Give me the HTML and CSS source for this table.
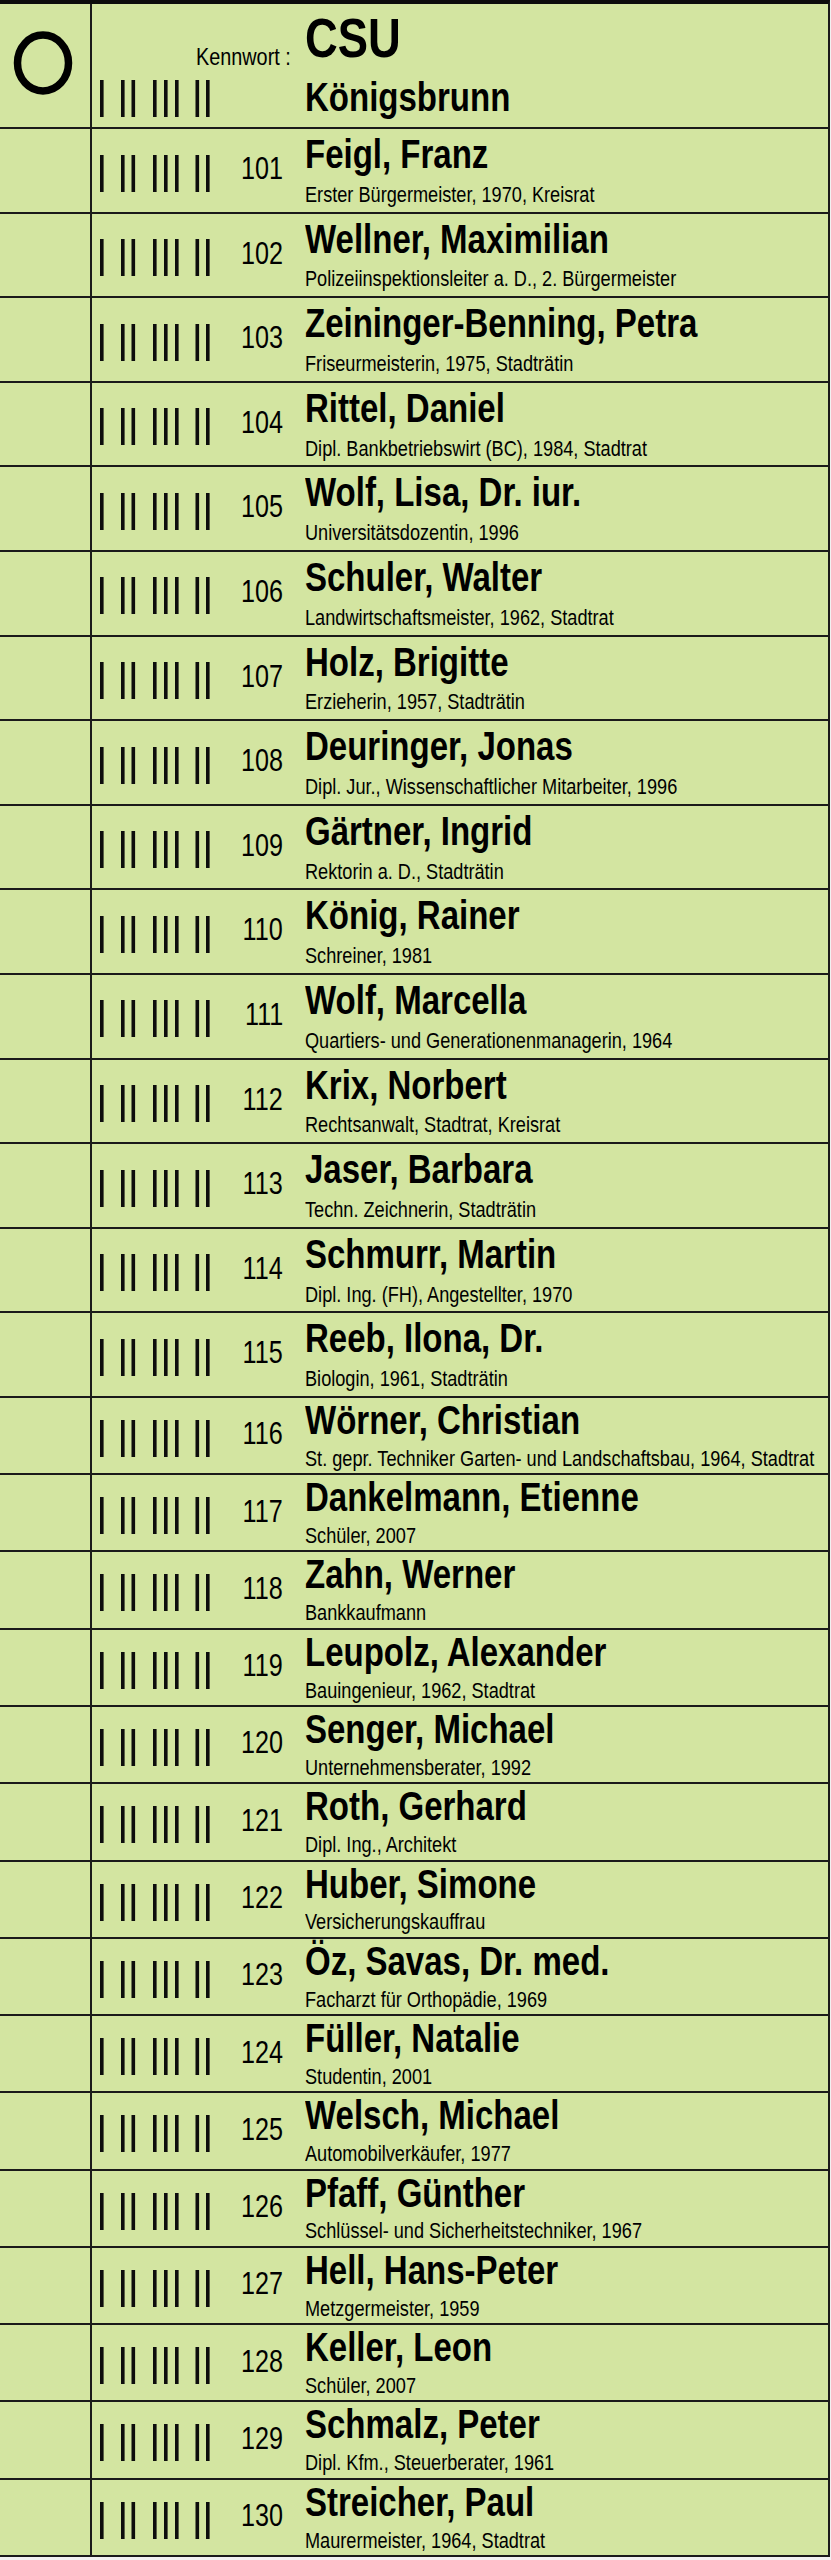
FILE: index.html
```html
<!DOCTYPE html>
<html lang="de">
<head>
<meta charset="utf-8">
<title>Stimmzettel CSU Königsbrunn</title>
<link rel="stylesheet" href="styles.css">
</head>
<body>
<svg class="defs" width="0" height="0" aria-hidden="true">
  <defs>
    <symbol id="bars" viewBox="0 0 110 37">
      <rect x="0" y="0" width="3.6" height="37"/>
      <rect x="21" y="0" width="3.6" height="37"/>
      <rect x="31.5" y="0" width="3.6" height="37"/>
      <rect x="53" y="0" width="3.6" height="37"/>
      <rect x="64" y="0" width="3.6" height="37"/>
      <rect x="75" y="0" width="3.6" height="37"/>
      <rect x="95.5" y="0" width="3.6" height="37"/>
      <rect x="106" y="0" width="3.6" height="37"/>
    </symbol>
  </defs>
</svg>
<div class="ballot">
  <div class="row head">
    <div class="c1"><svg class="ring" width="64" height="70" viewBox="0 0 64 70"><ellipse cx="32" cy="35" rx="25.5" ry="28" fill="none" stroke="#000" stroke-width="7.5"/></svg></div>
    <div class="c2 head-c2">
      <div class="kennwort"><span class="nar-r">Kennwort :</span></div>
      <svg class="bars"><use href="#bars"/></svg>
    </div>
    <div class="c3">
      <div class="party">CSU</div>
      <div class="town">Königsbrunn</div>
    </div>
  </div>

  <div class="row tall"><div class="c1"></div><div class="c2"><svg class="bars"><use href="#bars"/></svg><span class="num">101</span></div><div class="c3"><div class="name">Feigl, Franz</div><div class="sub">Erster Bürgermeister, 1970, Kreisrat</div></div></div>
  <div class="row tall"><div class="c1"></div><div class="c2"><svg class="bars"><use href="#bars"/></svg><span class="num">102</span></div><div class="c3"><div class="name">Wellner, Maximilian</div><div class="sub">Polizeiinspektionsleiter a. D., 2. Bürgermeister</div></div></div>
  <div class="row tall"><div class="c1"></div><div class="c2"><svg class="bars"><use href="#bars"/></svg><span class="num">103</span></div><div class="c3"><div class="name">Zeininger-Benning, Petra</div><div class="sub">Friseurmeisterin, 1975, Stadträtin</div></div></div>
  <div class="row tall"><div class="c1"></div><div class="c2"><svg class="bars"><use href="#bars"/></svg><span class="num">104</span></div><div class="c3"><div class="name">Rittel, Daniel</div><div class="sub">Dipl. Bankbetriebswirt (BC), 1984, Stadtrat</div></div></div>
  <div class="row tall"><div class="c1"></div><div class="c2"><svg class="bars"><use href="#bars"/></svg><span class="num">105</span></div><div class="c3"><div class="name">Wolf, Lisa, Dr. iur.</div><div class="sub">Universitätsdozentin, 1996</div></div></div>
  <div class="row tall"><div class="c1"></div><div class="c2"><svg class="bars"><use href="#bars"/></svg><span class="num">106</span></div><div class="c3"><div class="name">Schuler, Walter</div><div class="sub">Landwirtschaftsmeister, 1962, Stadtrat</div></div></div>
  <div class="row tall"><div class="c1"></div><div class="c2"><svg class="bars"><use href="#bars"/></svg><span class="num">107</span></div><div class="c3"><div class="name">Holz, Brigitte</div><div class="sub">Erzieherin, 1957, Stadträtin</div></div></div>
  <div class="row tall"><div class="c1"></div><div class="c2"><svg class="bars"><use href="#bars"/></svg><span class="num">108</span></div><div class="c3"><div class="name">Deuringer, Jonas</div><div class="sub">Dipl. Jur., Wissenschaftlicher Mitarbeiter, 1996</div></div></div>
  <div class="row tall"><div class="c1"></div><div class="c2"><svg class="bars"><use href="#bars"/></svg><span class="num">109</span></div><div class="c3"><div class="name">Gärtner, Ingrid</div><div class="sub">Rektorin a. D., Stadträtin</div></div></div>
  <div class="row tall"><div class="c1"></div><div class="c2"><svg class="bars"><use href="#bars"/></svg><span class="num">110</span></div><div class="c3"><div class="name">König, Rainer</div><div class="sub">Schreiner, 1981</div></div></div>
  <div class="row tall"><div class="c1"></div><div class="c2"><svg class="bars"><use href="#bars"/></svg><span class="num">111</span></div><div class="c3"><div class="name">Wolf, Marcella</div><div class="sub">Quartiers- und Generationenmanagerin, 1964</div></div></div>
  <div class="row tall"><div class="c1"></div><div class="c2"><svg class="bars"><use href="#bars"/></svg><span class="num">112</span></div><div class="c3"><div class="name">Krix, Norbert</div><div class="sub">Rechtsanwalt, Stadtrat, Kreisrat</div></div></div>
  <div class="row tall"><div class="c1"></div><div class="c2"><svg class="bars"><use href="#bars"/></svg><span class="num">113</span></div><div class="c3"><div class="name">Jaser, Barbara</div><div class="sub">Techn. Zeichnerin, Stadträtin</div></div></div>
  <div class="row tall"><div class="c1"></div><div class="c2"><svg class="bars"><use href="#bars"/></svg><span class="num">114</span></div><div class="c3"><div class="name">Schmurr, Martin</div><div class="sub">Dipl. Ing. (FH), Angestellter, 1970</div></div></div>
  <div class="row tall"><div class="c1"></div><div class="c2"><svg class="bars"><use href="#bars"/></svg><span class="num">115</span></div><div class="c3"><div class="name">Reeb, Ilona, Dr.</div><div class="sub">Biologin, 1961, Stadträtin</div></div></div>

  <div class="row short"><div class="c1"></div><div class="c2"><svg class="bars"><use href="#bars"/></svg><span class="num">116</span></div><div class="c3"><div class="name">Wörner, Christian</div><div class="sub">St. gepr. Techniker Garten- und Landschaftsbau, 1964, Stadtrat</div></div></div>
  <div class="row short"><div class="c1"></div><div class="c2"><svg class="bars"><use href="#bars"/></svg><span class="num">117</span></div><div class="c3"><div class="name">Dankelmann, Etienne</div><div class="sub">Schüler, 2007</div></div></div>
  <div class="row short"><div class="c1"></div><div class="c2"><svg class="bars"><use href="#bars"/></svg><span class="num">118</span></div><div class="c3"><div class="name">Zahn, Werner</div><div class="sub">Bankkaufmann</div></div></div>
  <div class="row short"><div class="c1"></div><div class="c2"><svg class="bars"><use href="#bars"/></svg><span class="num">119</span></div><div class="c3"><div class="name">Leupolz, Alexander</div><div class="sub">Bauingenieur, 1962, Stadtrat</div></div></div>
  <div class="row short"><div class="c1"></div><div class="c2"><svg class="bars"><use href="#bars"/></svg><span class="num">120</span></div><div class="c3"><div class="name">Senger, Michael</div><div class="sub">Unternehmensberater, 1992</div></div></div>
  <div class="row short"><div class="c1"></div><div class="c2"><svg class="bars"><use href="#bars"/></svg><span class="num">121</span></div><div class="c3"><div class="name">Roth, Gerhard</div><div class="sub">Dipl. Ing., Architekt</div></div></div>
  <div class="row short"><div class="c1"></div><div class="c2"><svg class="bars"><use href="#bars"/></svg><span class="num">122</span></div><div class="c3"><div class="name">Huber, Simone</div><div class="sub">Versicherungskauffrau</div></div></div>
  <div class="row short"><div class="c1"></div><div class="c2"><svg class="bars"><use href="#bars"/></svg><span class="num">123</span></div><div class="c3"><div class="name">Öz, Savas, Dr. med.</div><div class="sub">Facharzt für Orthopädie, 1969</div></div></div>
  <div class="row short"><div class="c1"></div><div class="c2"><svg class="bars"><use href="#bars"/></svg><span class="num">124</span></div><div class="c3"><div class="name">Füller, Natalie</div><div class="sub">Studentin, 2001</div></div></div>
  <div class="row short"><div class="c1"></div><div class="c2"><svg class="bars"><use href="#bars"/></svg><span class="num">125</span></div><div class="c3"><div class="name">Welsch, Michael</div><div class="sub">Automobilverkäufer, 1977</div></div></div>
  <div class="row short"><div class="c1"></div><div class="c2"><svg class="bars"><use href="#bars"/></svg><span class="num">126</span></div><div class="c3"><div class="name">Pfaff, Günther</div><div class="sub">Schlüssel- und Sicherheitstechniker, 1967</div></div></div>
  <div class="row short"><div class="c1"></div><div class="c2"><svg class="bars"><use href="#bars"/></svg><span class="num">127</span></div><div class="c3"><div class="name">Hell, Hans-Peter</div><div class="sub">Metzgermeister, 1959</div></div></div>
  <div class="row short"><div class="c1"></div><div class="c2"><svg class="bars"><use href="#bars"/></svg><span class="num">128</span></div><div class="c3"><div class="name">Keller, Leon</div><div class="sub">Schüler, 2007</div></div></div>
  <div class="row short"><div class="c1"></div><div class="c2"><svg class="bars"><use href="#bars"/></svg><span class="num">129</span></div><div class="c3"><div class="name">Schmalz, Peter</div><div class="sub">Dipl. Kfm., Steuerberater, 1961</div></div></div>
  <div class="row short"><div class="c1"></div><div class="c2"><svg class="bars"><use href="#bars"/></svg><span class="num">130</span></div><div class="c3"><div class="name">Streicher, Paul</div><div class="sub">Maurermeister, 1964, Stadtrat</div></div></div>
</div>
</body>
</html>
```

FILE: styles.css
```css
html, body {
  margin: 0;
  padding: 0;
  background: #f1f1f1;
}
body {
  font-family: "Liberation Sans", Arial, sans-serif;
  color: #000;
}
.defs {
  position: absolute;
  width: 0;
  height: 0;
  overflow: hidden;
}
.ballot {
  width: 830px;
  box-sizing: border-box;
  background: #d3e5a1;
  border-top: 4px solid #0c0c0c;
  border-right: 2px solid #1a1a1a;
  overflow: hidden;
}
.row {
  display: flex;
  box-sizing: border-box;
  border-bottom: 2px solid #1a1a1a;
}
.row.head { height: 125px; }
.row.tall { height: 84.6px; --c2-top: 25.5px; --c3-top: 3px; --sub-gap: 6.9px; }
.row.short { height: 77.27px; --c2-top: 22px; --c3-top: 0px; --sub-gap: 4.9px; }

.c1 {
  width: 90px;
  flex: none;
  border-right: 2px solid #1a1a1a;
  display: flex;
  align-items: center;
  justify-content: center;
}
.ring {
  margin-right: 4px;
  margin-bottom: 5px;
}
.c2 {
  width: 213px;
  flex: none;
  box-sizing: border-box;
  display: flex;
  align-items: flex-start;
  padding: var(--c2-top) 22px 0 8px;
}
.bars {
  width: 110px;
  height: 37px;
  fill: #0d0d0d;
  flex: none;
}
/* condensed lettering (Arial Narrow look) */
.num,
.nar-r {
  display: inline-block;
  transform: scaleX(0.825);
  transform-origin: 100% 50%;
}
.name, .sub, .party, .town {
  transform: scaleX(0.825);
  transform-origin: 0 50%;
  width: 121%;
}
.num {
  margin-left: auto;
  margin-top: -1.5px;
  font-size: 30.5px;
  line-height: 30px;
}
.c3 {
  flex: 1;
  min-width: 0;
  padding-top: var(--c3-top);
}
.name {
  font-weight: bold;
  font-size: 40px;
  line-height: 44px;
  white-space: nowrap;
}
.sub {
  font-size: 22px;
  line-height: 24px;
  margin-top: var(--sub-gap);
  white-space: nowrap;
}

.head-c2 {
  flex-direction: column;
  align-items: stretch;
  padding: 0 14px 0 8px;
}
.kennwort {
  text-align: right;
  font-size: 24px;
  line-height: 24px;
  margin-top: 40.7px;
  white-space: nowrap;
}
.head-c2 .bars {
  margin-top: 11.3px;
}
.head .c3 {
  padding-top: 5.9px;
}
.party {
  font-weight: bold;
  font-size: 55px;
  line-height: 56px;
}
.town {
  font-weight: bold;
  font-size: 40px;
  line-height: 44px;
  margin-top: 9.2px;
}
```
